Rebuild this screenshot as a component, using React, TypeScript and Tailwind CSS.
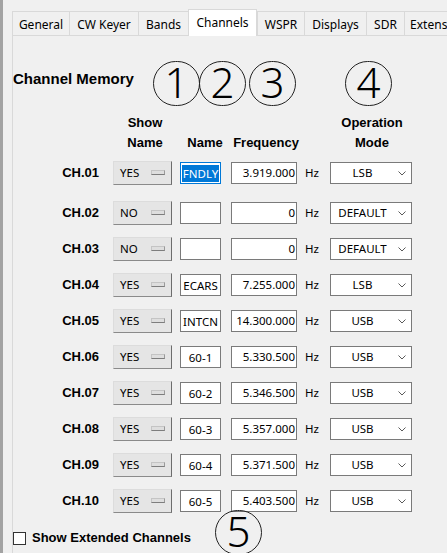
import React from 'react';

type Canal = {
  ch: string;
  mostrar: 'YES' | 'NO';
  nombre: string;
  freq: string;
  modo: string;
  seleccionado?: boolean;
};

const canales: Canal[] = [
  { ch: 'CH.01', mostrar: 'YES', nombre: 'FNDLY', freq: '3.919.000', modo: 'LSB', seleccionado: true },
  { ch: 'CH.02', mostrar: 'NO', nombre: '', freq: '0', modo: 'DEFAULT' },
  { ch: 'CH.03', mostrar: 'NO', nombre: '', freq: '0', modo: 'DEFAULT' },
  { ch: 'CH.04', mostrar: 'YES', nombre: 'ECARS', freq: '7.255.000', modo: 'LSB' },
  { ch: 'CH.05', mostrar: 'YES', nombre: 'INTCN', freq: '14.300.000', modo: 'USB' },
  { ch: 'CH.06', mostrar: 'YES', nombre: '60-1', freq: '5.330.500', modo: 'USB' },
  { ch: 'CH.07', mostrar: 'YES', nombre: '60-2', freq: '5.346.500', modo: 'USB' },
  { ch: 'CH.08', mostrar: 'YES', nombre: '60-3', freq: '5.357.000', modo: 'USB' },
  { ch: 'CH.09', mostrar: 'YES', nombre: '60-4', freq: '5.371.500', modo: 'USB' },
  { ch: 'CH.10', mostrar: 'YES', nombre: '60-5', freq: '5.403.500', modo: 'USB' },
];

const tabs = [
  { label: 'General', w: 'w-[57px]' },
  { label: 'CW Keyer', w: 'w-[69px]' },
  { label: 'Bands', w: 'w-[50px]' },
  { label: 'Channels', w: 'w-[69px]', activo: true },
  { label: 'WSPR', w: 'w-[47px]' },
  { label: 'Displays', w: 'w-[62px]' },
  { label: 'SDR', w: 'w-[38px]' },
  { label: 'Extensions', w: 'w-[72px]' },
];

const ui = "font-['Noto_Sans',sans-serif]";
const bold = "font-['Liberation_Sans',Arial,sans-serif] font-bold";

function Circulo({ n, className = '' }: { n: string; className?: string }) {
  return (
    <div className={`w-[47px] h-[45px] shrink-0 rounded-full border border-[#222] flex items-center justify-center ${className}`}>
      <span className={`${ui} text-[42px] leading-none text-black font-light -mt-[3px]`}>{n}</span>
    </div>
  );
}

function Toggle({ valor }: { valor: string }) {
  return (
    <div className="w-[59px] h-[24px] shrink-0 flex items-center bg-[#e5e5e5] border border-t-[#dcdcdc] border-l-[#dcdcdc] border-r-[#6d6d6d] border-b-[#8a8a8a]">
      <span className={`${ui} flex-1 pl-[6px] text-[11.5px] text-black`}>{valor}</span>
      <div className="w-[14px] h-[5px] mr-[6px] mt-[-2px] bg-[#dedede] border border-[#c4c4c4] border-b-[#7d7d7d] border-r-[#9a9a9a]" />
    </div>
  );
}

function Chevron() {
  return (
    <svg width="8" height="5" viewBox="0 0 8 5" className="block">
      <path d="M0.5 0.5 L4 4 L7.5 0.5" fill="none" stroke="#5a5a5a" strokeWidth="1" />
    </svg>
  );
}

function Fila({ c }: { c: Canal }) {
  return (
    <div className="flex items-center h-[24px]">
      <div className={`${bold} w-[86px] text-right text-[13px] text-black`}>{c.ch}</div>
      <div className="ml-[14px]">
        <Toggle valor={c.mostrar} />
      </div>
      <div
        className={`ml-[8px] w-[41px] h-[22px] shrink-0 bg-white border flex items-center justify-center ${
          c.seleccionado ? 'border-[#0078d7]' : 'border-[#7a7a7a]'
        }`}
      >
        <span
          className={`${ui} text-[11.5px] leading-[17px] px-px ${
            c.seleccionado ? 'bg-[#0078d7] text-white' : 'text-black'
          }`}
        >
          {c.nombre}
        </span>
      </div>
      <div className="ml-[10px] w-[66px] h-[22px] shrink-0 bg-white border border-[#7a7a7a] flex items-center justify-end pr-[1px]">
        <span className={`${ui} text-[11.5px] text-black`}>{c.freq}</span>
      </div>
      <span className={`${ui} ml-[8px] w-[25px] text-[11.5px] text-black`}>Hz</span>
      <div className="w-[82px] h-[22px] shrink-0 bg-white border border-[#7a7a7a] flex items-center">
        <span className={`${ui} flex-1 text-center text-[11.5px] text-black`}>{c.modo}</span>
        <div className="w-[16px] flex justify-center mr-[1px]">
          <Chevron />
        </div>
      </div>
    </div>
  );
}

export default function App() {
  return (
    <div className="relative w-[447px] h-[553px] overflow-hidden bg-[#f0f0f0] border-l-[3px] border-[#a3a3a3]">
      <div className="pl-[9px] pt-[9px]">
        {/* pestañas */}
        <div className="flex items-end h-[26px] whitespace-nowrap">
          {tabs.map((t) =>
            t.activo ? (
              <div
                key={t.label}
                className={`${t.w} shrink-0 h-[27px] -mb-px relative z-10 bg-white border border-b-0 border-[#d9d9d9] flex items-start justify-center pt-[4px] ${ui} text-[12px] leading-[17px] text-black`}
              >
                {t.label}
              </div>
            ) : (
              <div
                key={t.label}
                className={`${t.w} shrink-0 h-[24px] bg-[#f0f0f0] border-t border-l border-[#d9d9d9] flex items-start justify-center pt-[4px] ${ui} text-[12px] leading-[17px] text-black`}
              >
                {t.label}
              </div>
            )
          )}
        </div>

        {/* panel */}
        <div className="border-t border-l border-[#d9d9d9] h-[600px]">
          <div className="flex items-start pt-[25px]">
            <div className={`${bold} w-[140px] pt-[9px] text-[15px] leading-[18px] text-black`}>Channel Memory</div>
            <Circulo n="1" />
            <Circulo n="2" className="-ml-px" />
            <Circulo n="3" className="ml-[3px]" />
            <Circulo n="4" className="ml-[49px]" />
          </div>

          <div className={`${bold} flex items-end mt-[7px] text-[13px] leading-[20px] text-black`}>
            <div className="w-[86px]" />
            <div className="ml-[14px] w-[64px] text-center">
              <div>Show</div>
              <div>Name</div>
            </div>
            <div className="w-[56px] text-center">Name</div>
            <div className="w-[66px] text-center">Frequency</div>
            <div className="ml-[31px] w-[84px] text-center">
              <div>Operation</div>
              <div>Mode</div>
            </div>
          </div>

          <div className="mt-[8px] flex flex-col gap-[12px]">
            {canales.map((c, i) => (
              <div key={c.ch} className={i === 0 ? 'mb-[4px]' : ''}>
                <Fila c={c} />
              </div>
            ))}
          </div>

          <label className="mt-[17px] flex items-center h-[16px] gap-[6px]">
            <span className="w-[13px] h-[13px] bg-white border border-[#333]" />
            <span className={`${bold} text-[13px] text-black`}>Show Extended Channels</span>
          </label>
        </div>
      </div>

      <Circulo n="5" className="absolute left-[212px] top-[510px]" />
    </div>
  );
}
